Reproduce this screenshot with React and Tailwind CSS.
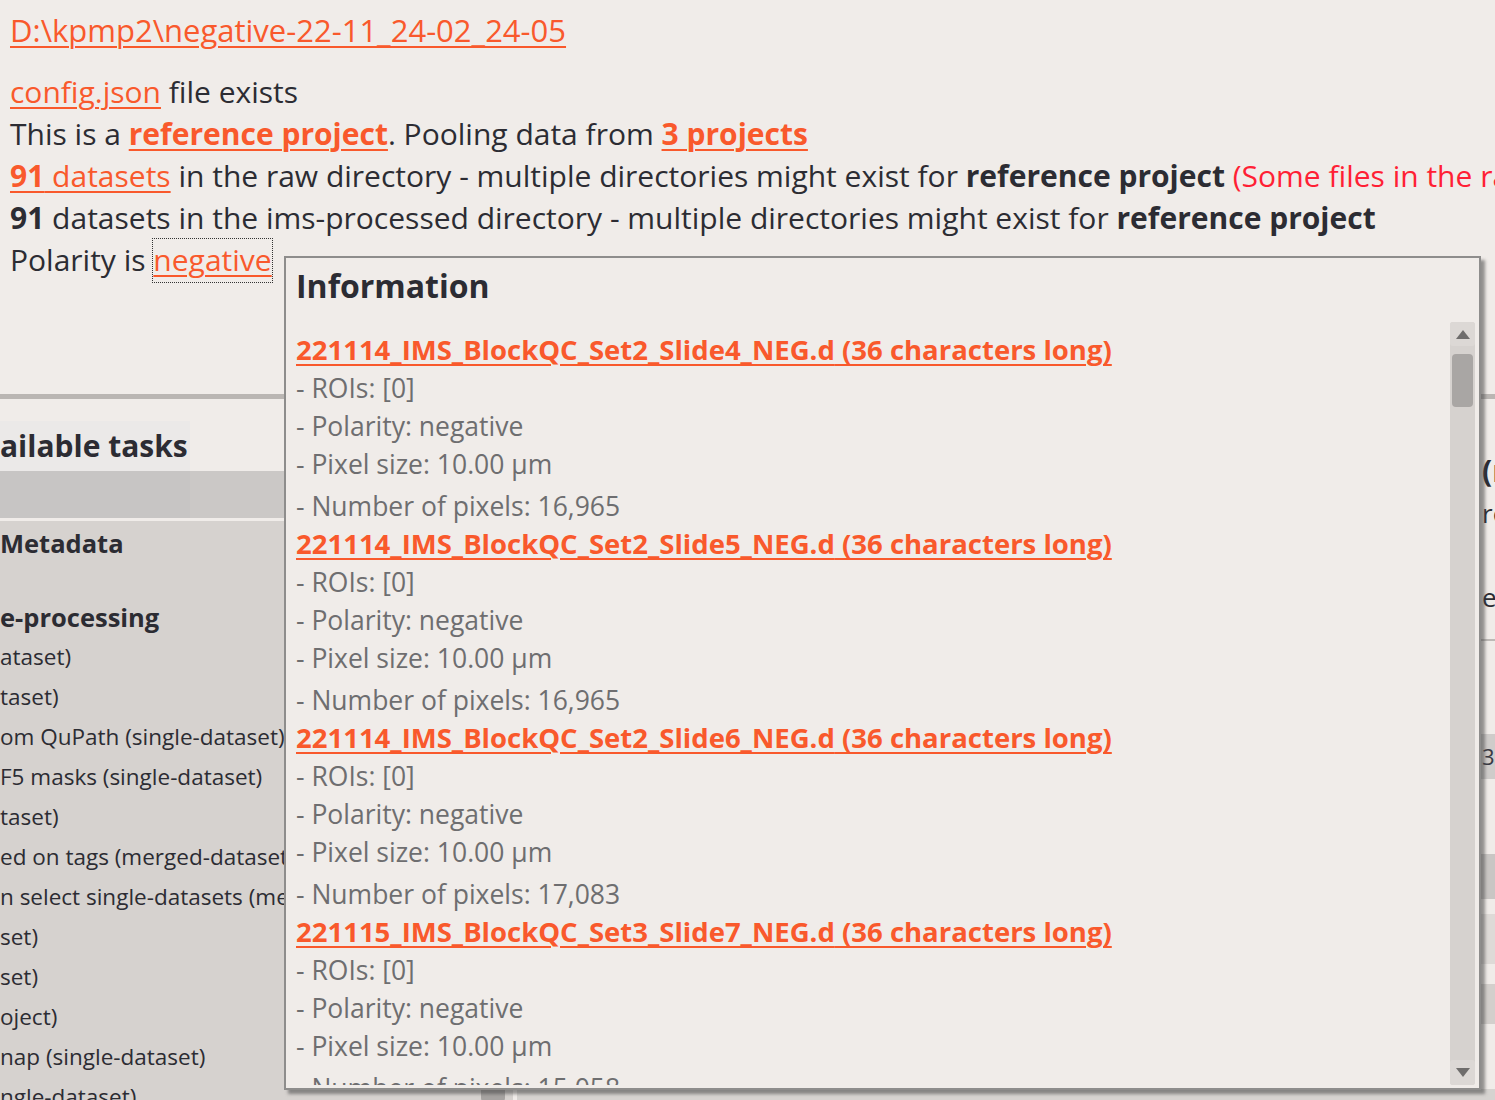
import React from "react";

const datasets = [
  { name: "221114_IMS_BlockQC_Set2_Slide4_NEG.d", px: "16,965" },
  { name: "221114_IMS_BlockQC_Set2_Slide5_NEG.d", px: "16,965" },
  { name: "221114_IMS_BlockQC_Set2_Slide6_NEG.d", px: "17,083" },
  { name: "221115_IMS_BlockQC_Set3_Slide7_NEG.d", px: "15,058" },
];

const items = [
  "ataset)",
  "taset)",
  "om QuPath (single-dataset)",
  "F5 masks (single-dataset)",
  "taset)",
  "ed on tags (merged-dataset)",
  "n select single-datasets (merged)",
  "set)",
  "set)",
  "oject)",
  "nap (single-dataset)",
  "ngle-dataset)",
];

function Link({ children, bold }) {
  return (
    <span
      className={`text-[#f9592c] underline decoration-[2px] underline-offset-[4px] ${bold ? "font-bold" : ""}`}
    >
      {children}
    </span>
  );
}

function Arrow({ up }) {
  return (
    <svg width="14" height="9" viewBox="0 0 14 9">
      {up ? <path d="M0 9 L7 0 L14 9 Z" fill="#6f6d6c" /> : <path d="M0 0 L7 9 L14 0 Z" fill="#6f6d6c" />}
    </svg>
  );
}

export default function App() {
  return (
    <div
      className="relative w-[1495px] h-[1100px] overflow-hidden bg-[#f0ece9] text-[#2c2c33]"
      style={{ fontFamily: '"Open Sans", "Noto Sans", sans-serif' }}
    >
      {/* top info */}
      <div className="px-[10px] pt-[9px] text-[30px] leading-[42px] whitespace-nowrap">
        <div className="text-[31px]">
          <Link>D:\kpmp2\negative-22-11_24-02_24-05</Link>
        </div>
        <div className="mt-[20px]">
          <Link>config.json</Link> file exists
        </div>
        <div>
          This is a <Link bold>reference project</Link>. Pooling data from <Link bold>3 projects</Link>
        </div>
        <div>
          <span className="text-[#f9592c] underline decoration-[2px] underline-offset-[4px]">
            <span className="font-bold">91</span> datasets
          </span>{" "}
          in the raw directory - multiple directories might exist for <span className="font-bold">reference project</span>{" "}
          <span className="text-[#ff1f35]">(Some files in the raw directory are not datasets)</span>
        </div>
        <div>
          <span className="font-bold">91</span> datasets in the ims-processed directory - multiple directories might exist for{" "}
          <span className="font-bold">reference project</span>
        </div>
        <div>
          Polarity is{" "}
          <span className="outline outline-1 outline-dotted outline-[#333] inline-block leading-[42px] h-[43px]">
            <Link>negative</Link>
          </span>
        </div>
      </div>

      {/* divider */}
      <div className="mt-[112px] h-[5px] bg-[#bab6b3]" />

      {/* lower area */}
      <div className="flex h-[702px]">
        {/* left panel */}
        <div className="w-[513px] flex flex-col">
          <div className="pt-[22px]">
            <div className="w-[190px] h-[50px] bg-[#ebe9e8] text-[30px] font-bold leading-[50px] whitespace-nowrap overflow-hidden">
              ailable tasks
            </div>
          </div>
          <div className="h-[47px] flex">
            <div className="w-[190px] bg-[#c7c5c4]" />
            <div className="flex-1 bg-[#cbc8c6]" />
          </div>
          <div className="h-[3px] bg-[#f0ece9]" />
          <div className="flex-1 flex bg-[#d6d2cf] overflow-hidden">
            <div className="w-[284px] whitespace-nowrap overflow-hidden">
              <div className="h-[46px] pt-[3px] text-[25.5px] font-bold leading-[38px]">Metadata</div>
              <div className="mt-[32px] text-[25.5px] font-bold leading-[36px]">e-processing</div>
              <div className="text-[22.5px] leading-[40px] mt-[2px]">
                {items.map((t, i) => (
                  <div key={i}>{t}</div>
                ))}
              </div>
            </div>
            <div className="flex-1" />
            <div className="w-[24px] mr-[8px] flex flex-col justify-end">
              <div className="h-[200px] bg-[#a6a3a1] rounded-[3px]" />
            </div>
          </div>
        </div>
        <div className="w-[4px] bg-[#f0ece9]" />
        {/* right panel (mostly covered) */}
        <div className="flex-1 flex flex-col overflow-hidden whitespace-nowrap">
          <div className="h-[52px]" />
          <div className="pl-[965px] text-[30px] font-bold leading-[40px]">(m</div>
          <div className="pl-[965px] text-[26px] leading-[44px]">re</div>
          <div className="h-[40px]" />
          <div className="pl-[965px] text-[26px] leading-[44px]">e</div>
          <div className="h-[20px]" />
          <div className="h-[2px] bg-[#bdb9b6]" />
          <div className="h-[93px]" />
          <div className="h-[45px] bg-[#cfccca] pl-[965px] text-[22px] leading-[45px] text-[#3a3a44]">3</div>
          <div className="h-[75px]" />
          <div className="h-[45px] bg-[#c9c6c4]" />
          <div className="h-[15px]" />
          <div className="h-[50px] bg-[#dedad7]" />
          <div className="h-[20px]" />
          <div className="h-[40px] bg-[#d3cfcc]" />
          <div className="flex-1" />
          <div className="h-[12px] bg-[#d6d3d0]" />
        </div>
      </div>

      {/* Information popup */}
      <div className="absolute left-[284px] top-[256px] w-[1197px] h-[834px] bg-[#f0ece9] border-2 border-[#8e8d8c] shadow-[4px_4px_3px_rgba(70,70,70,0.55)] flex flex-col">
        <div className="pl-[10px] pt-[8px] h-[64px] text-[32px] font-bold leading-[40px]">Information</div>
        <div className="flex-1 flex min-h-0 pb-[3px]">
          <div className="flex-1 overflow-hidden pl-[10px] pt-[9px] whitespace-nowrap">
            {datasets.map((d) => (
              <div key={d.name}>
                <div className="h-[38px] leading-[38px] text-[27.5px]">
                  <Link bold>
                    {d.name} (36 characters long)
                  </Link>
                </div>
                <div className="text-[26.5px] text-[#6e6e70]">
                  <div className="h-[38px] leading-[38px]">- ROIs: [0]</div>
                  <div className="h-[38px] leading-[38px]">- Polarity: negative</div>
                  <div className="h-[41px] leading-[38px]">- Pixel size: 10.00 μm</div>
                  <div className="h-[39px] leading-[41px]">- Number of pixels: {d.px}</div>
                </div>
              </div>
            ))}
          </div>
          <div className="w-[25px] mr-[4px] flex flex-col bg-[#d6d2cf] rounded-[3px]">
            <div className="h-[24px] bg-[#dcd8d5] rounded-[3px] flex items-center justify-center">
              <Arrow up />
            </div>
            <div className="flex-1 pt-[8px]">
              <div className="mx-[2px] h-[53px] bg-[#a9a6a4] rounded-[4px]" />
            </div>
            <div className="h-[25px] bg-[#dcd8d5] rounded-[3px] flex items-center justify-center">
              <Arrow />
            </div>
          </div>
        </div>
      </div>
    </div>
  );
}
